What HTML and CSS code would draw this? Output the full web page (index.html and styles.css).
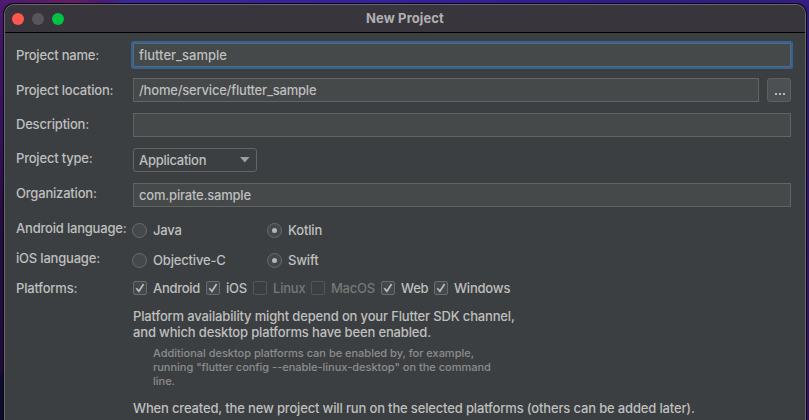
FILE: index.html
```
<!DOCTYPE html>
<html lang="en">
<head>
<meta charset="utf-8">
<title>New Project</title>
<link rel="stylesheet" href="styles.css">
</head>
<body>
<main class="window">
  <header class="titlebar">
    <div class="lights"><i class="light close"></i><i class="light minimize"></i><i class="light expand"></i></div>
    <h1 class="title">New Project</h1>
  </header>
  <form class="form">
    <div class="row"><span class="label">Project name:</span><div class="field focused">flutter_sample</div></div>
    <div class="row"><span class="label">Project location:</span><div class="field">/home/service/flutter_sample</div><div class="browse"><i></i><i></i><i></i></div></div>
    <div class="row"><span class="label up1">Description:</span><div class="field"></div></div>
    <div class="row"><span class="label up2">Project type:</span><div class="select"><span class="tight">Application</span><svg class="arrow" viewBox="0 0 10 6"><path d="M0 0h9.6L4.8 5.4z"/></svg></div></div>
    <div class="row"><span class="label up2">Organization:</span><div class="field">com.pirate.sample</div></div>
    <div class="row radios first"><span class="label">Android language:</span>
      <span class="option"><i class="radio"></i><span>Java</span></span>
      <span class="option"><i class="radio on"></i><span>Kotlin</span></span>
    </div>
    <div class="row radios"><span class="label">iOS language:</span>
      <span class="option"><i class="radio"></i><span>Objective-C</span></span>
      <span class="option"><i class="radio on"></i><span>Swift</span></span>
    </div>
    <div class="row platforms"><span class="label">Platforms:</span>
      <span class="check tight c-android"><i class="box"><svg viewBox="0 0 12 12"><path d="M2.3 6.3 4.9 9.3 9.6 2"/></svg></i>Android</span>
      <span class="check c-ios"><i class="box"><svg viewBox="0 0 12 12"><path d="M2.3 6.3 4.9 9.3 9.6 2"/></svg></i>iOS</span>
      <span class="check off c-linux"><i class="box"></i>Linux</span>
      <span class="check off tight c-mac"><i class="box"></i>MacOS</span>
      <span class="check c-web"><i class="box"><svg viewBox="0 0 12 12"><path d="M2.3 6.3 4.9 9.3 9.6 2"/></svg></i>Web</span>
      <span class="check c-win"><i class="box"><svg viewBox="0 0 12 12"><path d="M2.3 6.3 4.9 9.3 9.6 2"/></svg></i>Windows</span>
    </div>
    <div class="notes">
      <p class="note">Platform availability might depend on your Flutter SDK channel,<br>and which desktop platforms have been enabled.</p>
      <p class="hint">Additional desktop platforms can be enabled by, for example,<br>running "flutter config --enable-linux-desktop" on the command<br>line.</p>
      <p class="note">When created, the new project will run on the selected platforms (others can be added later).</p>
    </div>
  </form>
</main>
</body>
</html>
```

FILE: styles.css
```
* { box-sizing: border-box; }
body {
  margin: 0;
  padding: 4px 3px 0 4px;
  height: 420px;
  overflow: hidden;
  color: #bfbfbf;
  font: 500 13px/16px Inter, "Liberation Sans", sans-serif;
  letter-spacing: -0.2px;
  white-space: nowrap;
  background:
    linear-gradient(90deg, #4b1b6e 0, #651c62 75px, #491b78 105px, #3a2799 125px, #35219a 400px, #301b87 640px, #351d80 100%) top / 100% 5px no-repeat,
    linear-gradient(#4b1b6e, #3d1262 60px, #34105a 140px, #250b40 220px, #1d0b38 370px, #0d0b2e 380px, #0d0b2e) left / 50% 100% no-repeat,
    linear-gradient(#301b80, #2d1674 120px, #35115d 420px) right / 50% 100% no-repeat;
}
.window {
  width: 802px;
  height: 416px;
  border: 1px solid #68696b;
  border-bottom: 0;
  border-radius: 10px 10px 0 0;
  background: #3c3f41;
  box-shadow: 0 0 0 1px #080610;
}
.titlebar {
  display: flex;
  align-items: center;
  height: 28px;
  padding-left: 7px;
  border-bottom: 1px solid #000;
  border-radius: 9px 9px 0 0;
  background: #38363c;
}
.lights { display: flex; gap: 8px; width: 60px; }
.light { width: 12px; height: 12px; border-radius: 50%; background: #57565b; }
.light.close { background: #ff5650; }
.light.expand { background: #00c344; }
.title {
  flex: 1;
  margin: 0 67px 2px 0;
  font-size: 13px;
  line-height: 16px;
  font-weight: 700;
  letter-spacing: 0.12px;
  text-align: center;
  color: #b0afb2;
}
.form { display: flex; flex-direction: column; gap: 11px; padding: 10px 14px 0 11px; }
.row { display: flex; align-items: center; height: 24px; }
.label { flex: none; width: 117px; }
.tight { letter-spacing: -0.27px; }
.up1 { padding-bottom: 2px; }
.up2 { padding-bottom: 4px; }
.field {
  flex: 1;
  height: 24px;
  padding: 3px 5px;
  border: 1px solid #646464;
  background: #45494a;
}
.focused { border-color: #466d94; box-shadow: 0 0 0 2px #3d6185; border-radius: 1px; letter-spacing: 0; }
.browse {
  display: flex;
  justify-content: center;
  gap: 2px;
  width: 24px;
  height: 24px;
  margin-left: 8px;
  padding: 14px 0 0 1px;
  border: 1px solid #5e6060;
  border-radius: 3px;
  background: #4c5052;
}
.browse i { width: 2px; height: 2px; background: #bbb; }
.select {
  display: flex;
  align-items: center;
  justify-content: space-between;
  width: 124px;
  height: 24px;
  padding: 0 6px 0 5px;
  border: 1px solid #646464;
  border-radius: 3px;
}
.arrow { width: 10px; height: 6px; fill: #9b9da0; }
.radios { height: 15px; margin-top: 4px; line-height: 15px; }
.radios.first { margin-top: 5px; }
.radios .label { padding-bottom: 4px; }
.option { display: flex; align-items: center; gap: 6px; width: 135px; margin-left: -1px; margin-right: 1px; letter-spacing: -0.17px; }
.option span { line-height: 14px; padding-bottom: 1px; }
.radio {
  display: grid;
  place-items: center;
  width: 15px;
  height: 15px;
  border: 1px solid #6a6b6b;
  border-radius: 50%;
  background: #43494a;
}
.radio.on::after { content: ""; width: 5px; height: 5px; border-radius: 50%; background: #b5b5b5; }
.platforms { height: 14px; margin-top: 2px; }
.check { display: flex; align-items: center; gap: 6px; }
.box { flex: none; width: 14px; height: 14px; border: 1px solid #6b6b6b; border-radius: 2px; background: #43494a; }
.box svg { display: block; width: 12px; height: 12px; fill: none; stroke: #bbb; stroke-width: 1.7; }
.off { color: #777777; }
.off .box { border-color: #535658; background: none; }
.c-android { width: 73px; }
.c-ios { width: 47px; }
.c-linux { width: 58px; }
.c-mac { width: 70px; }
.c-web { width: 53px; }
.notes { height: 114px; padding: 2px 0 0 117px; letter-spacing: -0.155px; }
.note { margin: 0; }
.hint { margin: 6px 0 12px 20px; font-size: 11px; line-height: 14px; letter-spacing: -0.01px; color: #8c8c8c; }
```
